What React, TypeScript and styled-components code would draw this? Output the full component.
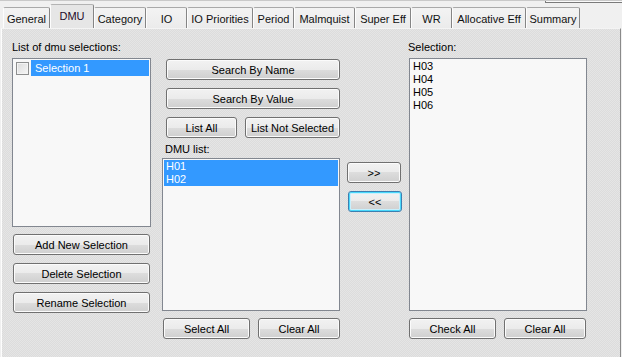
import styled, { createGlobalStyle, css } from 'styled-components'

const GlobalStyle = createGlobalStyle`
  html, body {
    margin: 0;
    padding: 0;
    background: #f0f0f0;
  }
  * {
    box-sizing: border-box;
  }
`

const Root = styled.div`
  width: 622px;
  height: 357px;
  overflow: hidden;
  background: #f0f0f0;
  font-family: "Liberation Sans", Arial, sans-serif;
  font-size: 11px;
  color: #000;
`

const TopEdge = styled.div`
  height: 3px;
  display: flex;
  border-top: 1px solid #c9c9c9;
`

const TopBox = styled.div`
  margin-left: auto;
  width: 77px;
  height: 2px;
  background: #fafafa;
  border-left: 1px solid #7a7a7a;
  border-bottom: 1px solid #7a7a7a;
`

const TabStrip = styled.div`
  height: 25px;
  display: flex;
  align-items: flex-end;
  padding-left: 3px;
`

const Tab = styled.div<{ $width: number; $active?: boolean }>`
  width: ${p => p.$width}px;
  height: 21px;
  display: flex;
  align-items: center;
  justify-content: center;
  white-space: nowrap;
  border-top: 1px solid #a9a9a9;
  border-left: 1px solid #fdfdfd;
  border-right: 1px solid #858585;
  border-radius: 2px 2px 0 0;
  background: linear-gradient(#f3f3f3, #ebebeb);
  color: #111;
  padding-top: 1px;

  ${p => p.$active && css`
    height: 24px;
    background: #e6e6e6;
    border-top-color: #b3b3b3;
    color: #1e0a2a;
    padding-bottom: 2px;
    position: relative;
    z-index: 1;
  `}
`

const Panel = styled.div`
  margin-left: 1px;
  width: 620px;
  height: 329px;
  border-left: 1px solid #fdfdfd;
  border-right: 1px solid #8a8a8a;
  border-top: 1px solid #f4f4f4;
  background-color: #e1e1e1;
  background-image: conic-gradient(#e5e5e5 25%, #dcdcdc 0 50%, #e5e5e5 0 75%, #dcdcdc 0);
  background-size: 2px 2px;
  padding: 12px 0 0 10px;
  display: flex;
  align-items: flex-start;
`

const Column = styled.div<{ $width: number; $gap: number; $top?: number }>`
  width: ${p => p.$width}px;
  margin-right: ${p => p.$gap}px;
  padding-top: ${p => p.$top ?? 0}px;
  display: flex;
  flex-direction: column;
`

const Label = styled.div<{ $indent?: number; $space?: number; $after?: number }>`
  height: 13px;
  line-height: 13px;
  margin-left: ${p => p.$indent ?? 0}px;
  margin-top: ${p => p.$space ?? 0}px;
  margin-bottom: ${p => p.$after ?? 4}px;
  white-space: nowrap;
`

const ListBox = styled.div<{ $height: number }>`
  height: ${p => p.$height}px;
  border: 1px solid #828790;
  background: #f8f8f8;
  padding: 1px;
`

const Item = styled.div<{ $selected?: boolean }>`
  height: 13px;
  line-height: 13px;
  padding-left: 2px;
  white-space: nowrap;
  background: ${p => (p.$selected ? '#3399ff' : 'transparent')};
  color: ${p => (p.$selected ? '#fff' : '#000')};
`

const CheckRow = styled.div`
  display: flex;
  align-items: center;
  height: 16px;
  gap: 2px;
`

const CheckBox = styled.span`
  width: 13px;
  height: 13px;
  margin-left: 2px;
  border: 1px solid #8e8f8f;
  background: linear-gradient(135deg, #dcdcdc, #f6f6f6);
  box-shadow: inset 0 0 0 1px #f4f4f4;
`

const CheckLabel = styled.span`
  flex: 1;
  height: 16px;
  line-height: 16px;
  background: #3399ff;
  color: #fff;
  padding-left: 4px;
`

const Button = styled.button<{ $width: number; $focused?: boolean; $indent?: number }>`
  width: ${p => p.$width}px;
  height: 21px;
  margin: 0 0 0 ${p => p.$indent ?? 0}px;
  padding: 0;
  font-family: inherit;
  font-size: 11px;
  color: #000;
  white-space: nowrap;
  border: 1px solid #707070;
  border-radius: 3px;
  background: linear-gradient(#f2f2f2 0%, #ebebeb 50%, #dddddd 50%, #cfcfcf 100%);
  box-shadow: inset 0 0 0 1px #fbfbfb;

  ${p => p.$focused && css`
    border-color: #3c7fb1;
    box-shadow: inset 0 0 0 1px #48d8fb, inset 0 0 0 2px #c8f0fd;
  `}
`

const ButtonStack = styled.div<{ $space: number }>`
  display: flex;
  flex-direction: column;
  gap: 8px;
  margin-top: ${p => p.$space}px;
`

const ButtonRow = styled.div<{ $space: number; $indent?: number }>`
  display: flex;
  gap: 8px;
  margin-top: ${p => p.$space}px;
  margin-left: ${p => p.$indent ?? 0}px;
`

const tabs: [string, number][] = [
  ['General', 47],
  ['DMU', 44],
  ['Category', 52],
  ['IO', 41],
  ['IO Priorities', 66],
  ['Period', 41],
  ['Malmquist', 61],
  ['Super Eff', 56],
  ['WR', 41],
  ['Allocative Eff', 74],
  ['Summary', 54],
]

const App = () => {
  return (
    <Root>
      <GlobalStyle />
      <TopEdge>
        <TopBox />
      </TopEdge>
      <TabStrip>
        {tabs.map(([name, width]) => (
          <Tab key={name} $width={width} $active={name === 'DMU'}>
            {name}
          </Tab>
        ))}
      </TabStrip>
      <Panel>
        <Column $width={139} $gap={11}>
          <Label>List of dmu selections:</Label>
          <ListBox $height={169}>
            <CheckRow>
              <CheckBox />
              <CheckLabel>Selection 1</CheckLabel>
            </CheckRow>
          </ListBox>
          <ButtonStack $space={7}>
            <Button $width={137} $indent={1}>Add New Selection</Button>
            <Button $width={137} $indent={1}>Delete Selection</Button>
            <Button $width={137} $indent={1}>Rename Selection</Button>
          </ButtonStack>
        </Column>

        <Column $width={178} $gap={7} $top={18}>
          <ButtonStack $space={0}>
            <Button $width={174} $indent={4}>Search By Name</Button>
            <Button $width={174} $indent={4}>Search By Value</Button>
          </ButtonStack>
          <ButtonRow $space={8} $indent={4}>
            <Button $width={71}>List All</Button>
            <Button $width={95}>List Not Selected</Button>
          </ButtonRow>
          <Label $indent={3} $space={5} $after={2}>DMU list:</Label>
          <ListBox $height={153}>
            <Item $selected>H01</Item>
            <Item $selected>H02</Item>
          </ListBox>
          <ButtonRow $space={7} $indent={1}>
            <Button $width={87}>Select All</Button>
            <Button $width={82}>Clear All</Button>
          </ButtonRow>
        </Column>

        <Column $width={55} $gap={7} $top={121}>
          <ButtonStack $space={0}>
            <Button $width={54}>&gt;&gt;</Button>
            <Button $width={54} $indent={1} $focused>&lt;&lt;</Button>
          </ButtonStack>
        </Column>

        <Column $width={178} $gap={0}>
          <Label $indent={-1}>Selection:</Label>
          <ListBox $height={253}>
            <Item>H03</Item>
            <Item>H04</Item>
            <Item>H05</Item>
            <Item>H06</Item>
          </ListBox>
          <ButtonRow $space={7}>
            <Button $width={87}>Check All</Button>
            <Button $width={82}>Clear All</Button>
          </ButtonRow>
        </Column>
      </Panel>
    </Root>
  )
}

export default App
